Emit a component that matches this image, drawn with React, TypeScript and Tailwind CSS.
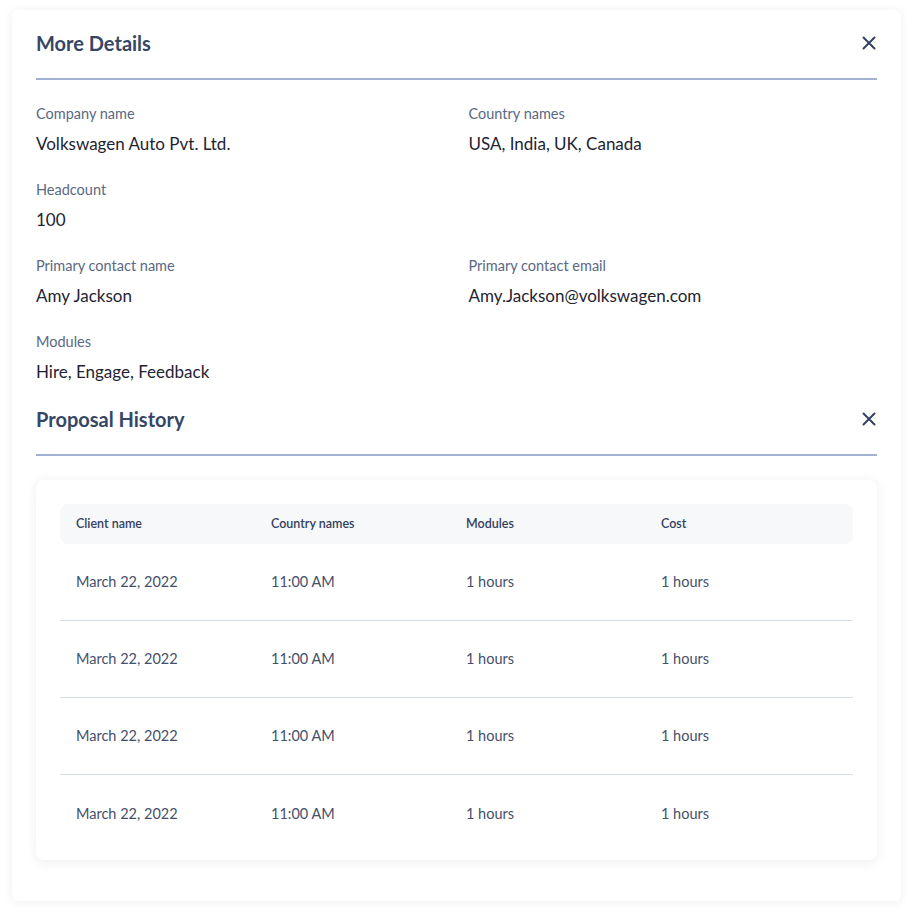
import React from 'react';

const details = [
  [
    { label: 'Company name', value: 'Volkswagen Auto Pvt. Ltd.' },
    { label: 'Country names', value: 'USA, India, UK, Canada' },
  ],
  [{ label: 'Headcount', value: '100' }, null],
  [
    { label: 'Primary contact name', value: 'Amy Jackson' },
    { label: 'Primary contact email', value: 'Amy.Jackson@volkswagen.com' },
  ],
  [{ label: 'Modules', value: 'Hire, Engage, Feedback' }, null],
];

const history = Array.from({ length: 4 }, () => ({
  client: 'March 22, 2022',
  country: '11:00 AM',
  modules: '1 hours',
  cost: '1 hours',
}));

const CloseIcon = () => (
  <svg width="14" height="14" viewBox="0 0 14 14" fill="none">
    <path d="M1.5 1.5L12.5 12.5M12.5 1.5L1.5 12.5" stroke="#33425f" strokeWidth="2" strokeLinecap="round" />
  </svg>
);

const SectionHeader = ({ title }: { title: string }) => (
  <div className="flex items-center justify-between border-b-2 border-[#a3b2d2] pb-[25px]">
    <h2 className="text-[20px] font-bold text-[#364766] leading-5">{title}</h2>
    <button className="mr-[1px] p-0">
      <CloseIcon />
    </button>
  </div>
);

const App = () => {
  return (
    <div className="min-h-screen bg-white pt-[10px] px-[12px] font-['Lato',sans-serif]">
      <div className="w-[889px] rounded-md bg-white shadow-[0_1px_10px_rgba(30,40,70,0.08)] px-6 pt-[23px] pb-[41px]">
        <SectionHeader title="More Details" />

        <div className="pt-[25px] flex flex-col gap-[27px]">
          {details.map((row, i) => (
            <div key={i} className="grid grid-cols-2 gap-6">
              {row.map((item, j) =>
                item ? (
                  <div key={j} className="flex flex-col gap-[11px]">
                    <span className="text-[14.5px] leading-[18px] text-[#5b6883]">{item.label}</span>
                    <span className="text-[17px] leading-5 text-[#1e2332]">{item.value}</span>
                  </div>
                ) : (
                  <div key={j} />
                )
              )}
            </div>
          ))}
        </div>

        <div className="mt-[27px]">
          <SectionHeader title="Proposal History" />
        </div>

        <div className="mt-6 rounded-lg bg-white shadow-[0_2px_12px_rgba(30,40,70,0.08)] px-6 pt-6 pb-2">
          <div className="grid grid-cols-[195px_195px_195px_1fr] pl-4 h-10 items-center rounded-lg bg-[#f6f8fa] text-[12.5px] font-semibold text-[#33415c]">
            <span>Client name</span>
            <span>Country names</span>
            <span>Modules</span>
            <span>Cost</span>
          </div>
          {history.map((r, i) => (
            <div
              key={i}
              className={`grid grid-cols-[195px_195px_195px_1fr] pl-4 h-[77px] items-center text-[14.5px] text-[#45506a] ${
                i < history.length - 1 ? 'border-b border-[#d6deeb]' : ''
              }`}
            >
              <span>{r.client}</span>
              <span>{r.country}</span>
              <span>{r.modules}</span>
              <span>{r.cost}</span>
            </div>
          ))}
        </div>
      </div>
    </div>
  );
};

export default App;
